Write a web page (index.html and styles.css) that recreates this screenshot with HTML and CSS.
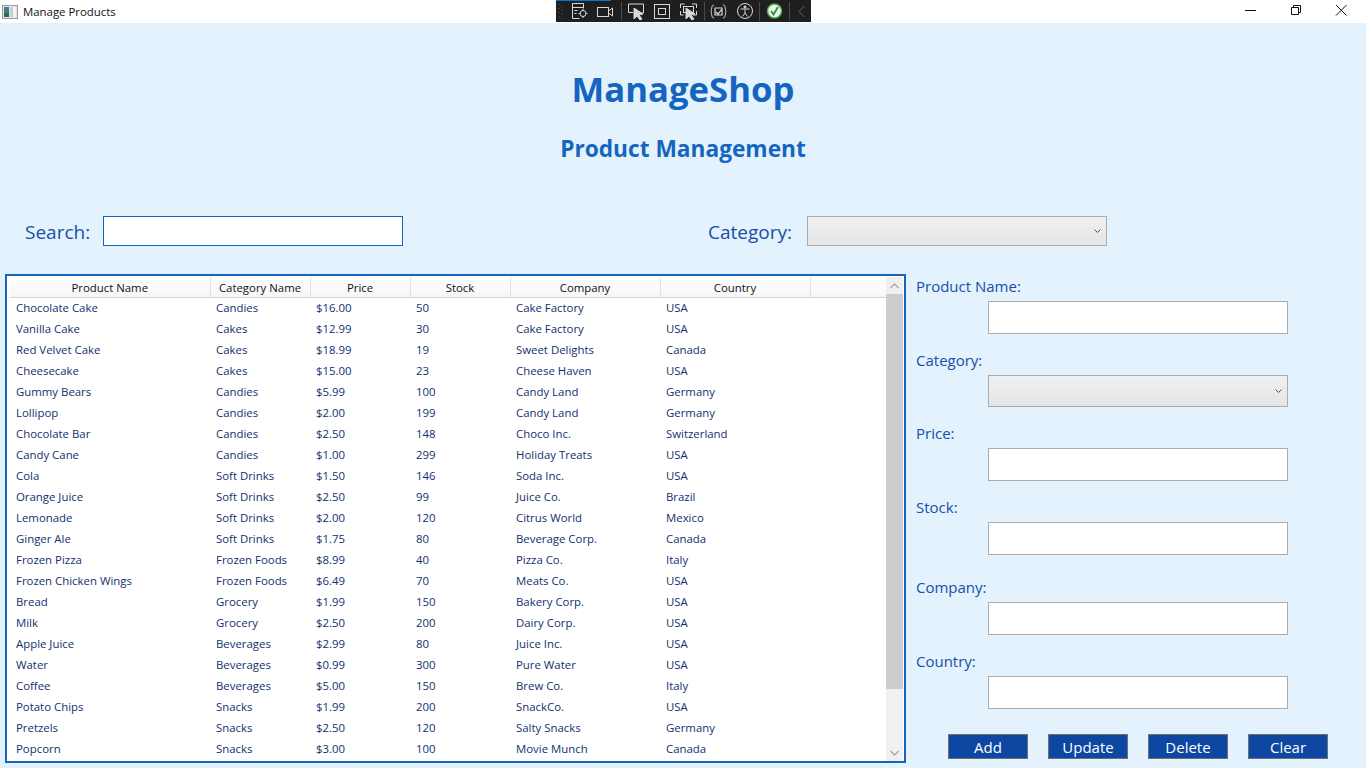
FILE: index.html
```html
<!DOCTYPE html>
<html>
<head>
  <title>Manage Products</title>
  <link rel="stylesheet" href="styles.css">
</head>
<body>
  <div class="titlebar">
    <svg class="app-icon" width="16" height="14" viewBox="0 0 16 14">
      <rect x="0.5" y="0.5" width="15" height="13" fill="#e4e4e4" stroke="#9a9a9a"/>
      <rect x="2" y="2" width="5" height="10" fill="#3f7d8c"/>
      <rect x="2" y="8" width="5" height="4" fill="#2f6a4f"/>
      <rect x="8" y="2" width="3" height="10" fill="#c3d3d3"/>
      <rect x="11" y="2" width="3" height="10" fill="#f4f4f4"/>
    </svg>
    <span class="window-title">Manage Products</span>
    <div class="window-buttons">
      <svg width="46" height="23" viewBox="0 0 46 23"><path d="M19 10.500h11" stroke="#111" fill="none"/></svg>
      <svg width="46" height="23" viewBox="0 0 46 23"><path d="M19.500 7.500h7v7h-7zM21.500 7.500v-2h7v7h-2" stroke="#111" fill="none"/></svg>
      <svg width="46" height="23" viewBox="0 0 46 23"><path d="M18 5l10.500 10.500M28.500 5l-10.500 10.500" stroke="#111" fill="none"/></svg>
    </div>
    <div class="debug-bar">
      <div class="debug-progress"></div>
      <svg width="255" height="22" viewBox="0 0 255 22" fill="none" stroke="#d8d8d8">
        <path d="M3 4v1M6 6v1M3 8v1M6 10v1M3 12v1M6 14v1M3 16v1M6 18v1" stroke="#555"/>
        <path d="M65.500 2v19M148.500 2v19M203.500 2v19M233.500 2v19" stroke="#4a4a4a"/>
        <!-- debug target -->
        <path d="M23.500 18.500h-7v-15h11v5M16 7.500h11M18.500 10.500h3M18.500 13.500h2"/>
        <circle cx="27" cy="13.500" r="3"/><path d="M27 9v2M27 16v2M22.500 13.500h2M29.500 13.500h2"/>
        <!-- camera -->
        <rect x="41.500" y="7.500" width="11" height="9"/><path d="M52.500 11l4-3v8l-4-3z"/>
        <!-- select element -->
        <path d="M77 12.500h-4.500v-8.500h15v9h-4"/>
        <path d="M78 8l0 11 3-3 3 4 2-1-3-4 4-1z" fill="#d8d8d8"/>
        <!-- layout bounds -->
        <rect x="98.500" y="4.500" width="15" height="14"/><rect x="102.500" y="8.500" width="7" height="6"/>
        <!-- track focus -->
        <path d="M124.500 8v-4h4M136 4h4.500v4M124.500 11v4h3M137 15h3.500v-4"/>
        <rect x="127.500" y="6.500" width="10" height="6"/>
        <path d="M130 8l0 11 3-3 3 4 2-1-3-4 4-1z" fill="#d8d8d8"/>
        <!-- hot reload -->
        <path d="M158 5c-3 0-2 5-3 6.500c1 1.500 0 6.500 3 6.500M167 5c3 0 2 5 3 6.500c-1 1.500 0 6.500-3 6.500"/>
        <path d="M159 8h7v7h-7zM160 12l2 2 4-5" stroke-width="1.200"/>
        <!-- accessibility -->
        <circle cx="189" cy="11" r="7.500"/><circle cx="189" cy="7" r="1" fill="#d8d8d8"/>
        <path d="M184.500 9h9M189 9.500v3.500M189 13l-2.500 3.500M189 13l2.500 3.500"/>
        <!-- status -->
        <circle cx="218.500" cy="11" r="7" fill="#f2f2f2" stroke="#4caf50" stroke-width="1.500"/>
        <path d="M215 11l2.500 3.500 4.500-7.500" stroke="#2e9e3a" stroke-width="2"/>
        <path d="M248.500 6l-5.500 5.500 5.500 5.500" stroke="#666"/>
      </svg>
    </div>
  </div>

  <div class="page">
    <header class="page-header">
      <h1>ManageShop</h1>
      <h2>Product Management</h2>
    </header>

    <div class="filter-row">
      <div class="filter-item search-filter">
        <label class="filter-label">Search:</label>
        <input class="search-input" type="text">
      </div>
      <div class="filter-item">
        <label class="filter-label">Category:</label>
        <div class="combo">
          <svg width="7" height="5" viewBox="0 0 7 5"><path d="M0.500 0.500l3 3 3-3" stroke="#555" fill="none"/></svg>
        </div>
      </div>
    </div>

    <div class="main-row">
      <div class="grid-box">
        <div class="grid-scroll">
          <table class="product-table">
            <colgroup>
              <col class="col-name">
              <col class="col-small">
              <col class="col-small">
              <col class="col-small">
              <col class="col-wide">
              <col class="col-wide">
              <col>
            </colgroup>
            <thead>
              <tr><th>Product Name</th><th>Category Name</th><th>Price</th><th>Stock</th><th>Company</th><th>Country</th><th></th></tr>
            </thead>
            <tbody>
              <tr><td>Chocolate Cake</td><td>Candies</td><td>$16.00</td><td>50</td><td>Cake Factory</td><td>USA</td><td></td></tr>
              <tr><td>Vanilla Cake</td><td>Cakes</td><td>$12.99</td><td>30</td><td>Cake Factory</td><td>USA</td><td></td></tr>
              <tr><td>Red Velvet Cake</td><td>Cakes</td><td>$18.99</td><td>19</td><td>Sweet Delights</td><td>Canada</td><td></td></tr>
              <tr><td>Cheesecake</td><td>Cakes</td><td>$15.00</td><td>23</td><td>Cheese Haven</td><td>USA</td><td></td></tr>
              <tr><td>Gummy Bears</td><td>Candies</td><td>$5.99</td><td>100</td><td>Candy Land</td><td>Germany</td><td></td></tr>
              <tr><td>Lollipop</td><td>Candies</td><td>$2.00</td><td>199</td><td>Candy Land</td><td>Germany</td><td></td></tr>
              <tr><td>Chocolate Bar</td><td>Candies</td><td>$2.50</td><td>148</td><td>Choco Inc.</td><td>Switzerland</td><td></td></tr>
              <tr><td>Candy Cane</td><td>Candies</td><td>$1.00</td><td>299</td><td>Holiday Treats</td><td>USA</td><td></td></tr>
              <tr><td>Cola</td><td>Soft Drinks</td><td>$1.50</td><td>146</td><td>Soda Inc.</td><td>USA</td><td></td></tr>
              <tr><td>Orange Juice</td><td>Soft Drinks</td><td>$2.50</td><td>99</td><td>Juice Co.</td><td>Brazil</td><td></td></tr>
              <tr><td>Lemonade</td><td>Soft Drinks</td><td>$2.00</td><td>120</td><td>Citrus World</td><td>Mexico</td><td></td></tr>
              <tr><td>Ginger Ale</td><td>Soft Drinks</td><td>$1.75</td><td>80</td><td>Beverage Corp.</td><td>Canada</td><td></td></tr>
              <tr><td>Frozen Pizza</td><td>Frozen Foods</td><td>$8.99</td><td>40</td><td>Pizza Co.</td><td>Italy</td><td></td></tr>
              <tr><td>Frozen Chicken Wings</td><td>Frozen Foods</td><td>$6.49</td><td>70</td><td>Meats Co.</td><td>USA</td><td></td></tr>
              <tr><td>Bread</td><td>Grocery</td><td>$1.99</td><td>150</td><td>Bakery Corp.</td><td>USA</td><td></td></tr>
              <tr><td>Milk</td><td>Grocery</td><td>$2.50</td><td>200</td><td>Dairy Corp.</td><td>USA</td><td></td></tr>
              <tr><td>Apple Juice</td><td>Beverages</td><td>$2.99</td><td>80</td><td>Juice Inc.</td><td>USA</td><td></td></tr>
              <tr><td>Water</td><td>Beverages</td><td>$0.99</td><td>300</td><td>Pure Water</td><td>USA</td><td></td></tr>
              <tr><td>Coffee</td><td>Beverages</td><td>$5.00</td><td>150</td><td>Brew Co.</td><td>Italy</td><td></td></tr>
              <tr><td>Potato Chips</td><td>Snacks</td><td>$1.99</td><td>200</td><td>SnackCo.</td><td>USA</td><td></td></tr>
              <tr><td>Pretzels</td><td>Snacks</td><td>$2.50</td><td>120</td><td>Salty Snacks</td><td>Germany</td><td></td></tr>
              <tr><td>Popcorn</td><td>Snacks</td><td>$3.00</td><td>100</td><td>Movie Munch</td><td>Canada</td><td></td></tr>
            </tbody>
          </table>
        </div>
        <div class="scrollbar">
          <div class="scroll-btn">
            <svg width="9" height="6" viewBox="0 0 9 6"><path d="M0.500 5l4-4 4 4" stroke="#a8a8a8" fill="none" stroke-width="1.300"/></svg>
          </div>
          <div class="scroll-thumb"></div>
          <div class="scroll-track"></div>
          <div class="scroll-btn">
            <svg width="9" height="6" viewBox="0 0 9 6"><path d="M0.500 1l4 4 4-4" stroke="#a8a8a8" fill="none" stroke-width="1.300"/></svg>
          </div>
        </div>
      </div>

      <div class="form-panel">
        <div class="field">
          <label class="field-label">Product Name:</label>
          <input class="field-input" type="text">
        </div>
        <div class="field field-tight">
          <label class="field-label">Category:</label>
          <div class="combo combo-form">
            <svg width="7" height="5" viewBox="0 0 7 5"><path d="M0.500 0.500l3 3 3-3" stroke="#555" fill="none"/></svg>
          </div>
        </div>
        <div class="field">
          <label class="field-label">Price:</label>
          <input class="field-input" type="text">
        </div>
        <div class="field field-loose">
          <label class="field-label">Stock:</label>
          <input class="field-input" type="text">
        </div>
        <div class="field">
          <label class="field-label">Company:</label>
          <input class="field-input" type="text">
        </div>
        <div class="field">
          <label class="field-label">Country:</label>
          <input class="field-input" type="text">
        </div>
        <div class="form-buttons">
          <button class="action-btn">Add</button>
          <button class="action-btn">Update</button>
          <button class="action-btn">Delete</button>
          <button class="action-btn">Clear</button>
        </div>
      </div>
    </div>
  </div>
</body>
</html>
```
FILE: styles.css
```css
* {
  box-sizing: border-box;
}

body {
  margin: 0;
  width: 1366px;
  height: 768px;
  overflow: hidden;
  background-color: #e3f2fd;
  font-family: "Open Sans", "Noto Sans", sans-serif;
}

/* Window chrome */
.titlebar {
  position: relative;
  display: flex;
  align-items: center;
  height: 23px;
  background-color: white;
  color: #111;
  font-size: 11.4px;
}

.app-icon {
  margin-left: 2px;
}

.window-title {
  margin-left: 5px;
}

.window-buttons {
  display: flex;
  margin-left: auto;
  margin-right: 2px;
  height: 23px;
}

.debug-bar {
  position: absolute;
  left: 556px;
  top: 0;
  width: 255px;
  height: 22px;
  background-color: #1f1f1f;
}

.debug-bar svg {
  display: block;
}

.debug-progress {
  position: absolute;
  left: 0;
  top: 0;
  width: 55px;
  height: 1px;
  background-color: #0078d7;
}

/* Header */
.page-header {
  text-align: center;
  color: #1565c0;
}

h1 {
  margin: 0;
  padding-top: 41px;
  font-size: 34.7px;
  line-height: 49px;
}

h2 {
  margin: 0;
  padding-top: 19px;
  font-size: 22.7px;
  line-height: 33px;
}

/* Search row */
.filter-row {
  display: flex;
  margin-top: 51px;
  height: 30px;
}

.filter-item {
  display: flex;
  align-items: center;
}

.search-filter {
  width: 708px;
  padding-left: 25px;
}

.filter-label {
  margin-right: 15px;
  padding-top: 1px;
  color: #1550a8;
  font-size: 19px;
}

.search-filter .filter-label {
  margin-right: 13px;
}

.search-input {
  width: 300px;
  height: 30px;
  border: 1px solid #1565c0;
  background-color: white;
}

.combo {
  display: flex;
  align-items: center;
  justify-content: flex-end;
  width: 300px;
  height: 30px;
  padding-right: 5px;
  border: 1px solid #acacac;
  background: linear-gradient(#f0f0f0, #e5e5e5);
}

.combo-form {
  height: 32px;
  margin-left: 72px;
}

/* Product grid */
.main-row {
  display: flex;
  margin-top: 28px;
  padding-left: 5px;
}

.grid-box {
  display: flex;
  width: 901px;
  height: 489px;
  padding: 1px 1px 0 3px;
  border: 2px solid #1565c0;
  background-color: white;
}

.grid-scroll {
  width: 876px;
  overflow: hidden;
}

.product-table {
  width: 876px;
  table-layout: fixed;
  border-collapse: collapse;
  font-size: 11.4px;
  color: #12306e;
}

.col-name {
  width: 200px;
}

.col-small {
  width: 100px;
}

.col-wide {
  width: 150px;
}

.product-table th {
  height: 20px;
  padding: 1px 0 0;
  font-weight: normal;
  color: #111;
  text-align: center;
  border-right: 1px solid #e2e2e2;
  border-bottom: 1px solid #d5d5d5;
  background: linear-gradient(white, #f6f6f6);
}

.product-table th:last-child {
  border-right: none;
}

.product-table td {
  height: 21px;
  padding: 0 0 0 6px;
  white-space: nowrap;
}

.scrollbar {
  display: flex;
  flex-direction: column;
  width: 17px;
  background-color: #f0f0f0;
}

.scroll-btn {
  display: flex;
  align-items: center;
  justify-content: center;
  height: 17px;
}

.scroll-thumb {
  height: 395px;
  background-color: #cdcdcd;
}

.scroll-track {
  flex: 1;
}

/* Edit form */
.form-panel {
  display: flex;
  flex-direction: column;
  margin-left: 10px;
  width: 440px;
}

.field {
  display: flex;
  flex-direction: column;
  height: 74px;
}

.field-tight {
  height: 73px;
}

.field-loose {
  height: 80px;
}

.field-label {
  height: 27px;
  padding-top: 1px;
  color: #1550a8;
  font-size: 15px;
  line-height: 22px;
}

.field-input {
  width: 300px;
  height: 33px;
  margin-left: 72px;
  border: 1px solid #acacac;
  background-color: white;
}

.form-buttons {
  display: flex;
  gap: 20px;
  margin-top: 11px;
  padding-left: 32px;
}

.action-btn {
  width: 80px;
  height: 25px;
  padding: 0;
  border: 1px solid #707070;
  background-color: #0d47a1;
  color: white;
  font-family: inherit;
  font-size: 15px;
}
```
